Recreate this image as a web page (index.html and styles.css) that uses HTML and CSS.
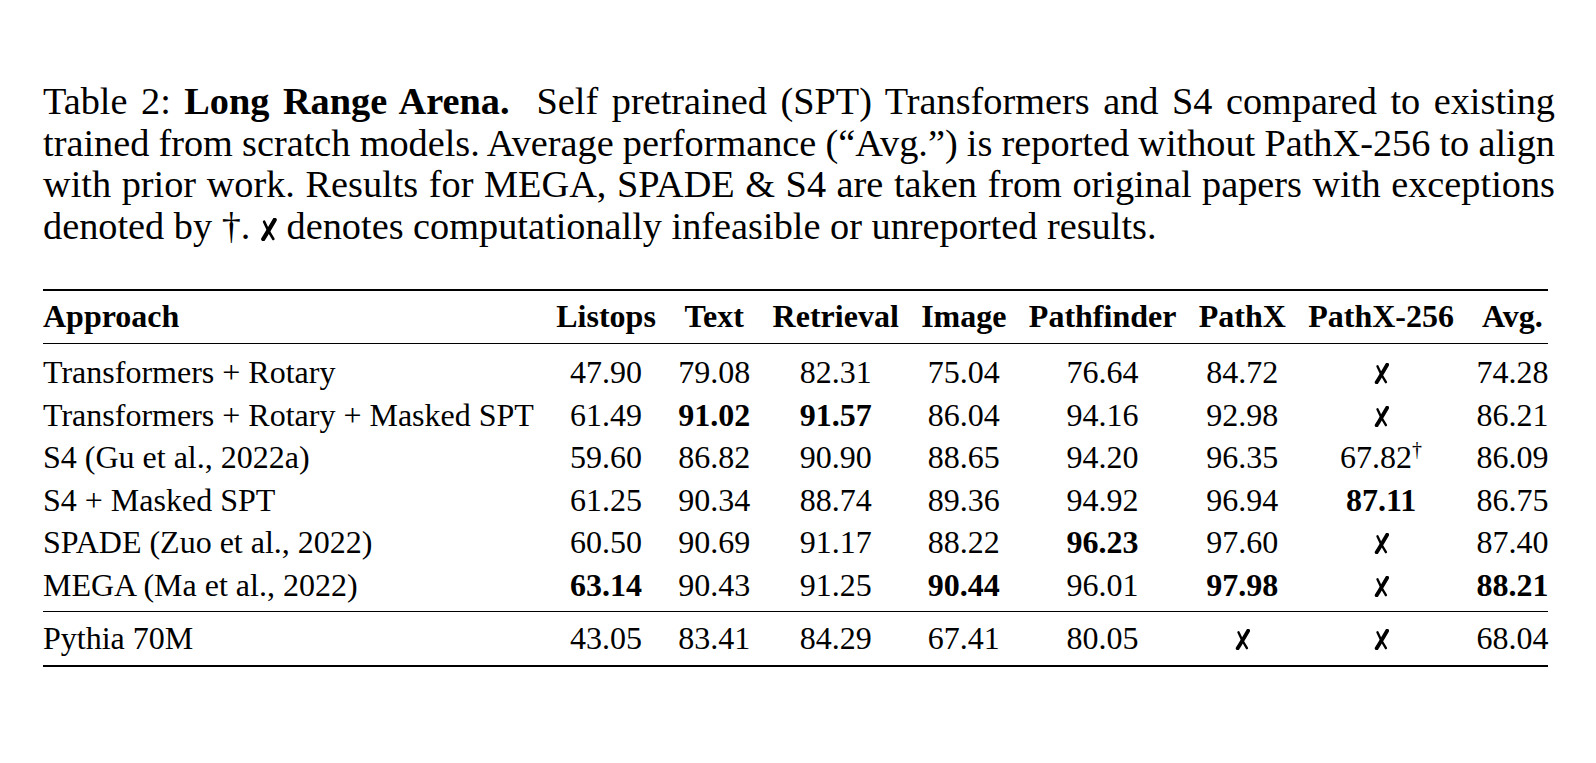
FILE: index.html
```html
<!DOCTYPE html>
<html>
<head>
<meta charset="utf-8">
<link rel="stylesheet" href="styles.css">
</head>
<body>
<div class="page">
  <div class="caption">
    <span class="line just">Table 2: <b>Long Range Arena.</b>&nbsp; Self pretrained (SPT) Transformers and S4 compared to existing</span>
    <span class="line just">trained from scratch models. Average performance (“Avg.”) is reported without PathX-256 to align</span>
    <span class="line just">with prior work. Results for MEGA, SPADE &amp; S4 are taken from original papers with exceptions</span>
    <span class="line">denoted by †. <svg class="x xc" viewBox="0 0 14 20" aria-label="✗"><path d="M12.4 1.6 C9.6 6.4 6.2 12.2 2.4 18.4"/><path class="thin" d="M3.2 3.2 C5.4 8.6 8.2 13.6 11.2 18.2"/></svg> denotes computationally infeasible or unreported results.</span>
  </div>
  <table class="lra">
    <thead>
      <tr>
        <th class="name">Approach</th><th>Listops</th><th>Text</th><th>Retrieval</th><th>Image</th><th>Pathfinder</th><th>PathX</th><th>PathX-256</th><th>Avg.</th>
      </tr>
    </thead>
    <tbody class="main">
      <tr><td class="name">Transformers + Rotary</td><td>47.90</td><td>79.08</td><td>82.31</td><td>75.04</td><td>76.64</td><td>84.72</td><td><svg class="x" viewBox="0 0 14 20"><path d="M12.4 1.6 C9.6 6.4 6.2 12.2 2.4 18.4"/><path class="thin" d="M3.2 3.2 C5.4 8.6 8.2 13.6 11.2 18.2"/></svg></td><td>74.28</td></tr>
      <tr><td class="name">Transformers + Rotary + Masked SPT</td><td>61.49</td><td><b>91.02</b></td><td><b>91.57</b></td><td>86.04</td><td>94.16</td><td>92.98</td><td><svg class="x" viewBox="0 0 14 20"><path d="M12.4 1.6 C9.6 6.4 6.2 12.2 2.4 18.4"/><path class="thin" d="M3.2 3.2 C5.4 8.6 8.2 13.6 11.2 18.2"/></svg></td><td>86.21</td></tr>
      <tr><td class="name">S4 (Gu et al., 2022a)</td><td>59.60</td><td>86.82</td><td>90.90</td><td>88.65</td><td>94.20</td><td>96.35</td><td>67.82<sup class="dag">†</sup></td><td>86.09</td></tr>
      <tr><td class="name">S4 + Masked SPT</td><td>61.25</td><td>90.34</td><td>88.74</td><td>89.36</td><td>94.92</td><td>96.94</td><td><b>87.11</b></td><td>86.75</td></tr>
      <tr><td class="name">SPADE (Zuo et al., 2022)</td><td>60.50</td><td>90.69</td><td>91.17</td><td>88.22</td><td><b>96.23</b></td><td>97.60</td><td><svg class="x" viewBox="0 0 14 20"><path d="M12.4 1.6 C9.6 6.4 6.2 12.2 2.4 18.4"/><path class="thin" d="M3.2 3.2 C5.4 8.6 8.2 13.6 11.2 18.2"/></svg></td><td>87.40</td></tr>
      <tr><td class="name">MEGA (Ma et al., 2022)</td><td><b>63.14</b></td><td>90.43</td><td>91.25</td><td><b>90.44</b></td><td>96.01</td><td><b>97.98</b></td><td><svg class="x" viewBox="0 0 14 20"><path d="M12.4 1.6 C9.6 6.4 6.2 12.2 2.4 18.4"/><path class="thin" d="M3.2 3.2 C5.4 8.6 8.2 13.6 11.2 18.2"/></svg></td><td><b>88.21</b></td></tr>
    </tbody>
    <tbody class="extra">
      <tr><td class="name">Pythia 70M</td><td>43.05</td><td>83.41</td><td>84.29</td><td>67.41</td><td>80.05</td><td><svg class="x" viewBox="0 0 14 20"><path d="M12.4 1.6 C9.6 6.4 6.2 12.2 2.4 18.4"/><path class="thin" d="M3.2 3.2 C5.4 8.6 8.2 13.6 11.2 18.2"/></svg></td><td><svg class="x" viewBox="0 0 14 20"><path d="M12.4 1.6 C9.6 6.4 6.2 12.2 2.4 18.4"/><path class="thin" d="M3.2 3.2 C5.4 8.6 8.2 13.6 11.2 18.2"/></svg></td><td>68.04</td></tr>
    </tbody>
  </table>
</div>
</body>
</html>
```

FILE: styles.css
```css
html, body {
  margin: 0;
  padding: 0;
  background: #ffffff;
}

body {
  font-family: "Liberation Serif", "Times New Roman", serif;
  color: #000000;
}

.page {
  padding: 81px 0 0 43px;
  width: 1512px;
}

.caption {
  font-size: 38.3px;
  line-height: 41.7px;
}

.caption .line {
  display: block;
  white-space: nowrap;
}

.caption .line.just {
  text-align: justify;
  text-align-last: justify;
  white-space: normal;
  word-spacing: -4px;
}

.x {
  display: inline-block;
  width: 15px;
  height: 21px;
  vertical-align: -1px;
}

.x path {
  fill: none;
  stroke: #000;
  stroke-width: 3.6;
  stroke-linecap: round;
}

.x path.thin {
  stroke-width: 2.3;
}

.x.xc {
  width: 17px;
  height: 23px;
  vertical-align: -2px;
}

.lra {
  margin-top: 41px;
  border-collapse: collapse;
  font-size: 32px;
  line-height: 42.5px;
}

.lra th,
.lra td {
  padding: 0 11.2px;
  text-align: center;
  white-space: nowrap;
  font-weight: normal;
}

.lra th {
  font-weight: bold;
}

.lra .name {
  text-align: left;
  padding-left: 0;
}

.lra th:last-child,
.lra td:last-child {
  padding-right: 0;
}

.lra thead tr {
  border-top: 2px solid #000;
  border-bottom: 1px solid #000;
}

.lra thead th {
  padding-top: 4px;
  padding-bottom: 6px;
}

.lra tbody.main tr:first-child td {
  padding-top: 7px;
}

.lra tbody.main tr:last-child td {
  padding-bottom: 5px;
}

.lra tbody.extra tr {
  border-top: 1px solid #000;
  border-bottom: 2px solid #000;
}

.lra tbody.extra td {
  padding-top: 5px;
  padding-bottom: 5px;
}

.dag {
  font-size: 20px;
  line-height: 0;
  vertical-align: 12px;
}
```
